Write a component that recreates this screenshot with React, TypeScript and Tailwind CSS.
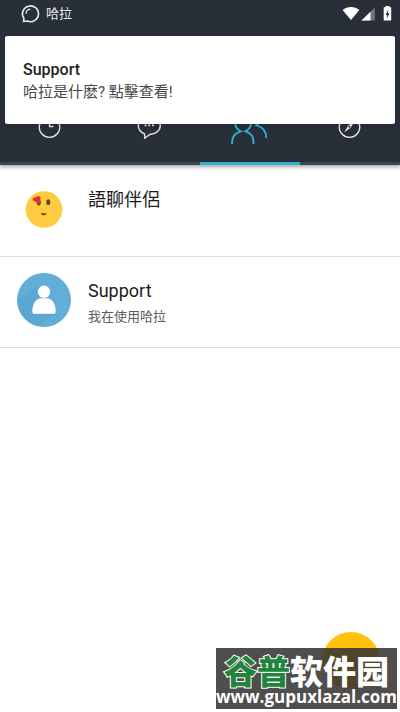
import type { ReactNode } from 'react'
import { clsx } from 'clsx'

type Tab = { label: string; icon: ReactNode; active?: boolean }

const TABS: Tab[] = [
  { label: 'Recent', icon: <ClockIcon /> },
  { label: 'Chats', icon: <ChatIcon /> },
  { label: 'Friends', icon: <PeopleIcon />, active: true },
  { label: 'Discover', icon: <CompassIcon /> },
]

const CONTACTS = [
  { name: '語聊伴侶', status: '', avatar: <EmojiAvatar /> },
  { name: 'Support', status: '我在使用哈拉', avatar: <PersonAvatar /> },
]

function ClockIcon() {
  return (
    <svg width="44" height="44" viewBox="0 0 44 44" fill="none" stroke="#e9ecee" strokeWidth="1.3">
      <circle cx="21.500" cy="22" r="10.3" />
      <path d="M21.500 13v8.500h4" />
    </svg>
  )
}

function ChatIcon() {
  return (
    <svg width="44" height="44" viewBox="0 0 44 44" fill="none" stroke="#e9ecee" strokeWidth="1.4" strokeLinejoin="round">
      <path d="M16.500 28.800C12.500 27.300 10.300 24.500 10.300 20.500C10.300 15 15 11 21.300 11s11 4 11 9.500c0 5-4.500 8.700-10.600 9L16.700 33.300Z" />
      <path d="M16.600 20.300h2M20.300 20.300h2M24 20.300h2" strokeWidth="1.800" />
    </svg>
  )
}

function PeopleIcon() {
  return (
    <svg width="44" height="44" viewBox="9 0 44 44" fill="none" stroke="#29b2d4" strokeWidth="1.9">
      <path d="M13 39C13 32 15 28.500 21.800 26.300C18 24.500 16 21.500 16 18C16 13 19.500 9.500 24 9.500s8 3.500 8 8.500c0 3.500-2 6.500-5.500 8.300C33 28.500 34.600 32 34.600 39" />
      <path d="M34 5c4 1 7 4 7 8c0 3-1 5.500-3.500 7.300C44.500 22 47.300 26 47.300 33" />
    </svg>
  )
}

function CompassIcon() {
  return (
    <svg width="44" height="44" viewBox="0 0 44 44" fill="none" stroke="#e9ecee" strokeWidth="1.3">
      <circle cx="21.500" cy="22" r="10.3" />
      <path d="M27.500 15L22.700 22.700L16 27.500L20.300 20.500Z" fill="#e9ecee" stroke="none" />
      <circle cx="21.500" cy="21.700" r="1" fill="#282f39" stroke="none" />
    </svg>
  )
}

function EmojiAvatar() {
  return (
    <svg width="54" height="54" viewBox="0 0 54 54">
      <circle cx="27" cy="27.500" r="18.300" fill="#ffcb3f" />
      <ellipse cx="21.800" cy="20.500" rx="2" ry="2.900" fill="#6b4515" />
      <ellipse cx="31.300" cy="20.200" rx="2" ry="2.900" fill="#6b4515" />
      <path d="M23 22L16.300 18.700C14.700 17 16.500 14.900 18.500 15.700C19 14 23 13.700 23.600 15.700Z" fill="#e0303a" />
      <path d="M23.800 31.300h5.800c-.6 2.700-5.200 2.700-5.800 0Z" fill="#71450f" />
    </svg>
  )
}

function PersonAvatar() {
  return (
    <svg width="54" height="54" viewBox="0 0 54 54">
      <circle cx="27" cy="27" r="27" fill="#62aed8" />
      <path d="M.4 27L22 13L38.500 40.500L21 53.200A27 27 0 0 1 .4 27Z" fill="#5ba7d1" />
      <circle cx="27" cy="18.800" r="6.200" fill="#fff" />
      <path d="M15.300 38.500c0-7.500 3.700-13.300 8.700-13.300h6c5 0 8.700 5.800 8.700 13.300c0 1.600-1 2.300-2.300 2.300H17.600c-1.300 0-2.300-.7-2.300-2.300Z" fill="#fff" />
    </svg>
  )
}

function StatusBar() {
  return (
    <div className="flex h-7 items-center pl-5 pr-1 text-[#e7eaec]">
      <svg width="20" height="20" viewBox="0 0 20 20" fill="none" stroke="currentColor" strokeWidth="1.600">
        <path d="M3.500 17.500L3.900 14.300A8 7.900 0 1 1 7.200 17Z" strokeLinejoin="round" />
        <path d="M6 10c0-2.600 1.800-4.500 4.300-4.800" strokeWidth="1.200" />
      </svg>
      <span className="ml-1.5 text-[13px] leading-5">哈拉</span>
      <svg className="ml-auto" width="54" height="18" viewBox="0 0 54 18" fill="#fff">
        <path d="M.5 5C5.500 1 12.500 1 17.300 5L9 15Z" />
        <path d="M19.500 15.500L32.800 2.500V15.500Z" fillOpacity=".35" />
        <path d="M19.500 15.500L28.500 6.700V15.500Z" />
        <path d="M43.500 1h4v1.300h1.700v13.200h-7.500V2.300h1.800Z" />
        <path d="M46.500 4.500l-3 5.500h1.700l-.6 3.700l3-5.500h-1.700Z" fill="#282f39" />
      </svg>
    </div>
  )
}

function Notification() {
  return (
    <button
      type="button"
      className="absolute inset-x-[5px] top-9 z-10 rounded-xs bg-white px-[18px] pt-6 pb-5 text-left shadow-md"
    >
      <span className="block text-base leading-5 font-medium text-[#222]">Support</span>
      <span className="block text-[15px] leading-6 text-[#484848]">哈拉是什麽? 點擊查看!</span>
    </button>
  )
}

function Watermark() {
  return (
    <div className="absolute right-[3px] bottom-[3px] bg-[#302f2e]/85 pt-1 pb-1 text-center text-white">
      <p className="font-['Noto_Sans_CJK_SC',sans-serif] text-[33px] leading-9 font-black whitespace-nowrap">
        <span className="text-[#20853a] [-webkit-text-stroke:2px_#fff] [paint-order:stroke_fill]">谷普</span>
        软件园
      </p>
      <p className="font-['Open_Sans',sans-serif] text-[17px] leading-[17px] font-bold">www.gupuxlazal.com</p>
    </div>
  )
}

export default function App() {
  return (
    <div className="relative flex min-h-screen flex-col overflow-hidden bg-white font-[Roboto,'Noto_Sans_CJK_TC',sans-serif]">
      <header className="bg-[#282f39] shadow-[0_2px_4px_rgba(0,0,0,0.35)]">
        <StatusBar />
        <nav className="flex pt-[77px]">
          {TABS.map((tab) => (
            <button
              key={tab.label}
              type="button"
              aria-label={tab.label}
              className={clsx(
                'flex h-15 flex-1 justify-center border-b-3',
                tab.active ? 'border-[#35afd0]' : 'border-[#3a464d]'
              )}
            >
              {tab.icon}
            </button>
          ))}
        </nav>
      </header>

      <Notification />

      <main className="pt-px">
        <ul>
          {CONTACTS.map((contact) => (
            <li key={contact.name} className="border-b border-[#dcdcdc]">
              <a href="#" className="flex h-[90px] gap-[17px] px-[17px] pt-4">
                {contact.avatar}
                <div className="pt-1">
                  <p className="text-lg leading-7 text-[#1c1c1c]">{contact.name}</p>
                  <p className="text-[13px] leading-6 text-[#5c5c5c]">{contact.status}</p>
                </div>
              </a>
            </li>
          ))}
        </ul>
      </main>

      <button
        type="button"
        aria-label="Add"
        className="absolute right-5 bottom-[22px] size-[58px] rounded-full bg-[#ffc10e]"
      />
      <Watermark />
    </div>
  )
}
